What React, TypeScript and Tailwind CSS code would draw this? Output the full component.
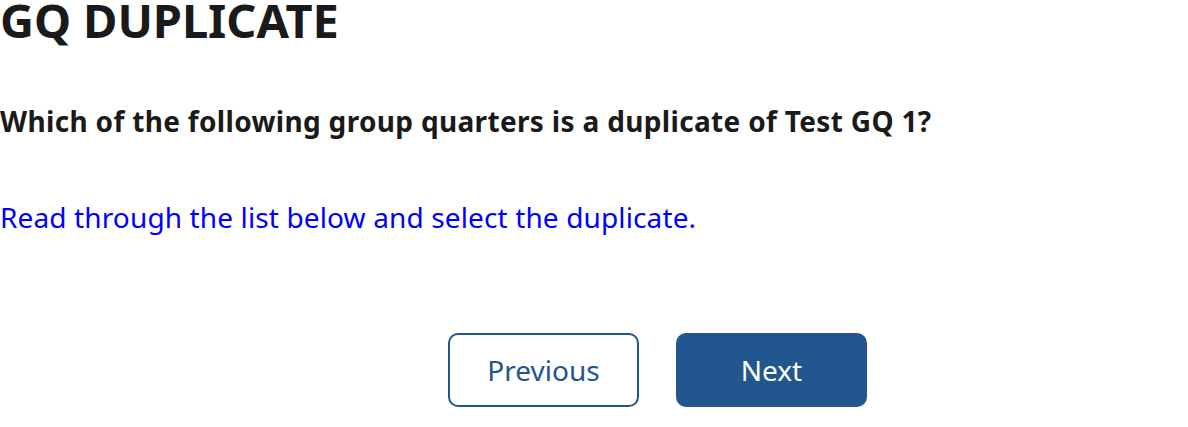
export default function App() {
  return (
    <div className="w-[1188px] h-[427px] bg-white text-[#1a1a1a] font-['Segoe_UI','Noto_Sans',sans-serif] overflow-hidden">
      <h1 className="text-[47px] font-bold leading-[41px] tracking-[-0.1px]">GQ DUPLICATE</h1>
      <p className="mt-[63px] text-[28px] font-bold leading-[34px] tracking-[0.33px]">
        Which of the following group quarters is a duplicate of Test GQ 1?
      </p>
      <p className="mt-[62px] text-[28px] leading-[34px] tracking-[0.13px] text-[#0000ff]">
        Read through the list below and select the duplicate.
      </p>
      <div className="mt-[99px] flex gap-[37px] pl-[448px]">
        <button className="w-[191px] h-[74px] rounded-[10px] border-2 border-[#22558f] bg-white text-[#22558f] text-[28px]">
          Previous
        </button>
        <button className="w-[191px] h-[74px] rounded-[10px] bg-[#22568f] text-white text-[28px]">
          Next
        </button>
      </div>
    </div>
  )
}
